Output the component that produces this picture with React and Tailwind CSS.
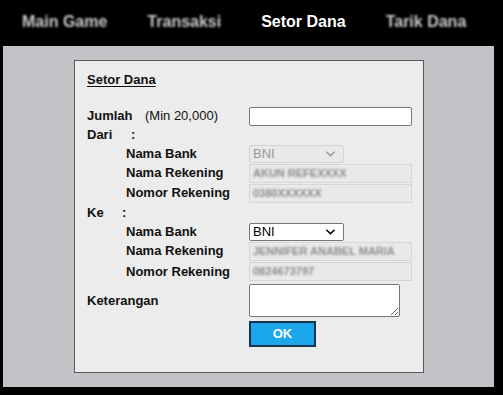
import React from 'react';

const navItems = [
  { label: 'Main Game', active: false },
  { label: 'Transaksi', active: false },
  { label: 'Setor Dana', active: true },
  { label: 'Tarik Dana', active: false },
];

const Chevron = ({ className }) => (
  <svg viewBox="0 0 10 6" className={className} fill="none" stroke="currentColor" strokeWidth="1.8" strokeLinecap="round" strokeLinejoin="round">
    <path d="M1 1l4 4 4-4" />
  </svg>
);

const SelectBox = ({ disabled }) => (
  <div
    className={`w-[95px] h-[18px] flex items-center justify-between pl-[3px] pr-[8px] rounded-[2px] border text-[13px] ${
      disabled ? 'bg-[#e9e9e9] border-[#d4d4d4] text-[#9a9a9a]' : 'bg-white border-[#767676] text-black'
    }`}
  >
    <span>BNI</span>
    <Chevron className={`w-[9px] h-[6px] ${disabled ? 'text-[#9a9a9a]' : 'text-black'}`} />
  </div>
);

const ReadOnlyField = ({ value }) => (
  <div className="w-[163px] h-[19px] flex items-center px-[3px] bg-[#e9e9e9] border border-[#d6d6d6] text-[11px] text-[#8c8c8c] overflow-hidden whitespace-nowrap">
    <span className="blur-[0.9px] font-bold">{value}</span>
  </div>
);

const SubRow = ({ label, children, h = 'h-[20px]' }) => (
  <div className={`flex items-center ${h}`}>
    <div className="w-[162px] pl-[39px] font-bold">{label}</div>
    {children}
  </div>
);

export default function App() {
  return (
    <div className="w-[503px] h-[395px] bg-black text-[13px] text-[#111] overflow-hidden" style={{ fontFamily: '"Liberation Sans", Arial, sans-serif' }}>
      {/* Nav */}
      <div className="h-[46px] flex items-center pl-[22px] gap-[40px] pb-[3px]">
        {navItems.map((item) => (
          <span
            key={item.label}
            className={`text-[16px] font-bold ${item.active ? 'text-white' : 'text-[#c9cbd0] blur-[1px]'}`}
          >
            {item.label}
          </span>
        ))}
      </div>

      {/* Content area */}
      <div className="ml-[3px] w-[491px] h-[341px] bg-[#c1c3c6] pt-[14px] pl-[71px]">
        <div className="w-[350px] h-[313px] bg-[#ececec] border border-[#5a5a5a] pl-[12px] pt-[9px]">
          <div className="h-[16px] font-bold underline underline-offset-2">Setor Dana</div>

          <div className="mt-[20px]">
            <div className="flex items-center h-[20px]">
              <div className="w-[162px] flex">
                <span className="font-bold w-[58px]">Jumlah</span>
                <span>(Min 20,000)</span>
              </div>
              <div className="w-[163px] h-[19px] bg-white border border-[#767676] rounded-[2px]" />
            </div>

            <div className="flex items-center h-[18px] font-bold">
              <span className="w-[44px]">Dari</span>
              <span>:</span>
            </div>
            <SubRow label="Nama Bank" h="h-[19px]">
              <SelectBox disabled />
            </SubRow>
            <SubRow label="Nama Rekening">
              <ReadOnlyField value="AKUN REFEXXXX" />
            </SubRow>
            <SubRow label="Nomor Rekening">
              <ReadOnlyField value="0380XXXXXX" />
            </SubRow>

            <div className="flex items-center h-[19px] font-bold">
              <span className="w-[35px]">Ke</span>
              <span>:</span>
            </div>
            <SubRow label="Nama Bank" h="h-[19px]">
              <SelectBox />
            </SubRow>
            <SubRow label="Nama Rekening">
              <ReadOnlyField value="JENNIFER ANABEL MARIA" />
            </SubRow>
            <SubRow label="Nomor Rekening" h="h-[21px]">
              <ReadOnlyField value="0824673797" />
            </SubRow>

            <div className="flex items-center h-[35px] mt-[1px]">
              <div className="w-[162px] font-bold">Keterangan</div>
              <textarea className="w-[151px] h-[33px] bg-white border border-[#767676] rounded-[2px] outline-none" />
            </div>

            <div className="flex mt-[3px]">
              <div className="w-[162px]" />
              <button className="w-[67px] h-[26px] bg-[#1ca7ec] border-2 border-[#17364d] text-white font-bold text-[13px]">
                OK
              </button>
            </div>
          </div>
        </div>
      </div>
    </div>
  );
}
